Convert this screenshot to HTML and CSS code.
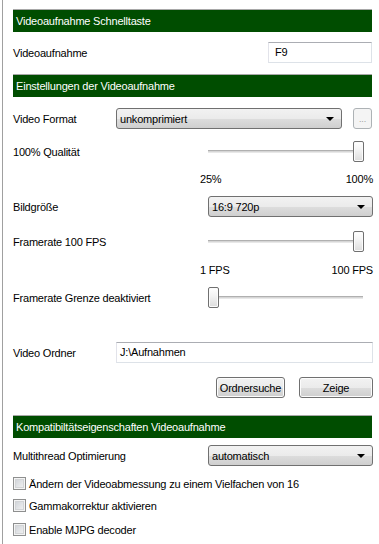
FILE: index.html
```html
<!DOCTYPE html>
<html lang="de">
<head>
<meta charset="utf-8">
<link rel="stylesheet" href="styles.css">
</head>
<body>
<div class="frame">
  <div class="panel">
    <div class="header h1">Videoaufnahme Schnelltaste</div>

    <div class="row r-hotkey">
      <span class="label">Videoaufnahme</span>
      <div class="textbox tb-hotkey">F9</div>
    </div>

    <div class="header h2">Einstellungen der Videoaufnahme</div>

    <div class="row r-format">
      <span class="label">Video Format</span>
      <div class="combo combo-format"><span>unkomprimiert</span><i class="arrow"></i></div>
      <div class="dots">...</div>
    </div>

    <div class="row r-quality">
      <span class="label">100% Qualität</span>
      <div class="slider"><div class="track"></div><div class="thumb thumb-right"></div></div>
    </div>

    <div class="row scale s-quality">
      <span>25%</span><span>100%</span>
    </div>

    <div class="row r-size">
      <span class="label">Bildgröße</span>
      <div class="combo combo-wide"><span>16:9 720p</span><i class="arrow"></i></div>
    </div>

    <div class="row r-fps">
      <span class="label">Framerate 100 FPS</span>
      <div class="slider"><div class="track"></div><div class="thumb thumb-right"></div></div>
    </div>

    <div class="row scale s-fps">
      <span>1 FPS</span><span>100 FPS</span>
    </div>

    <div class="row r-limit">
      <span class="label">Framerate Grenze deaktiviert</span>
      <div class="slider"><div class="track"></div><div class="thumb thumb-left"></div></div>
    </div>

    <div class="row r-folder">
      <span class="label">Video Ordner</span>
      <div class="textbox tb-folder">J:\Aufnahmen</div>
    </div>

    <div class="row r-buttons">
      <div class="btn btn-browse">Ordnersuche</div>
      <div class="btn btn-show">Zeige</div>
    </div>

    <div class="header h3">Kompatibiltätseigenschaften Videoaufnahme</div>

    <div class="row r-thread">
      <span class="label">Multithread Optimierung</span>
      <div class="combo combo-wide"><span>automatisch</span><i class="arrow"></i></div>
    </div>

    <div class="check c1"><span class="box"></span><span>Ändern der Videoabmessung zu einem Vielfachen von 16</span></div>
    <div class="check c2"><span class="box"></span><span>Gammakorrektur aktivieren</span></div>
    <div class="check c3"><span class="box"></span><span>Enable MJPG decoder</span></div>
  </div>
</div>
</body>
</html>
```
FILE: styles.css
```css
html, body {
  margin: 0;
  padding: 0;
  background: #ffffff;
}
body {
  width: 379px;
  height: 544px;
  overflow: hidden;
  font-family: "Liberation Sans", Arial, sans-serif;
  font-size: 11px;
  letter-spacing: -0.2px;
  color: #000;
}
.frame {
  margin-left: 2px;
  border-left: 1px solid #a0a0a0;
  height: 544px;
  padding-left: 10px;
}
.panel {
  width: 360px;
  display: flex;
  flex-direction: column;
}
.header {
  height: 22px;
  border-top: 1px solid #a8a8a8;
  background: #004d00;
  color: #fff;
  display: flex;
  align-items: center;
  padding-left: 3px;
  width: 356px;
}
.h1 { margin-top: 9px; }
.h2 { margin-top: 11px; }
.h3 { margin-top: 17px; }

.row {
  display: flex;
  align-items: center;
  height: 21px;
  position: relative;
}
.label { width: 103px; flex: none; }
.r-hotkey { margin-top: 10px; }
.r-hotkey .label { width: 255px; }
.r-format { margin-top: 11px; }
.r-quality { margin-top: 12px; }
.r-size { margin-top: 11px; }
.r-fps { margin-top: 14px; }
.r-limit { margin-top: 11px; }
.r-folder { margin-top: 34px; }
.r-buttons { margin-top: 14px; justify-content: flex-end; gap: 14px; }
.r-thread { margin-top: 7px; }

.r-quality .label, .r-size .label, .r-fps .label, .r-limit .label, .r-thread .label { width: 195px; }

.scale {
  height: 13px;
  justify-content: space-between;
  padding-left: 187px;
  width: 173px;
}
.s-quality { margin-top: 10px; }
.s-fps { margin-top: 11px; }

.textbox {
  height: 21px;
  box-sizing: border-box;
  border: 1px solid #dde2e8;
  border-top-color: #abadb3;
  border-left-color: #e2e3ea;
  padding: 2px 0 0 6px;
  line-height: 15px;
}
.tb-hotkey { width: 104px; }
.tb-folder { width: 257px; padding-left: 3px; }

.combo {
  height: 21px;
  box-sizing: border-box;
  border: 1px solid #707070;
  border-radius: 3px;
  background: linear-gradient(#f2f2f2 0%, #ebebeb 50%, #dddddd 51%, #cfcfcf 100%);
  display: flex;
  align-items: center;
  justify-content: space-between;
  padding: 0 7px 0 3px;
}
.combo-format { width: 226px; }
.combo-wide { width: 165px; }
.arrow {
  width: 0; height: 0;
  border-left: 4px solid transparent;
  border-right: 4px solid transparent;
  border-top: 4px solid #000;
}
.dots {
  margin-left: 11px;
  width: 19px;
  height: 21px;
  box-sizing: border-box;
  border: 1px solid #adb2b5;
  border-radius: 3px;
  background: #f4f4f4;
  color: #a0a0a0;
  font-size: 9px;
  display: flex;
  align-items: center;
  justify-content: center;
}

.slider {
  position: relative;
  width: 156px;
  height: 21px;
}
.track {
  position: absolute;
  left: 0; right: 1px;
  top: 9px;
  height: 3px;
  box-sizing: border-box;
  border-top: 1px solid #b0b0b0;
  border-bottom: 1px solid #e8e8e8;
  background: #d6d6d6;
}
.thumb {
  position: absolute;
  top: 0;
  width: 11px;
  height: 21px;
  box-sizing: border-box;
  border: 1px solid #707070;
  border-radius: 2px;
  background: linear-gradient(#ffffff 0%, #f2f2f2 45%, #dcdcdc 100%);
  box-shadow: inset 0 0 0 1px #fbfbfb;
}
.thumb-right { right: 0; }
.thumb-left { left: 0; }

.btn {
  height: 21px;
  box-sizing: border-box;
  border: 1px solid #707070;
  border-radius: 3px;
  background: linear-gradient(#f2f2f2 0%, #ebebeb 50%, #dddddd 51%, #cfcfcf 100%);
  box-shadow: inset 0 0 0 1px #fcfcfc;
  display: flex;
  align-items: center;
  justify-content: center;
}
.btn-browse { width: 69px; }
.btn-show { width: 74px; }

.check {
  display: flex;
  align-items: center;
  gap: 3px;
  height: 13px;
}
.c1 { margin-top: 11px; }
.c2 { margin-top: 9px; }
.c3 { margin-top: 11px; }
.box {
  width: 13px;
  height: 13px;
  box-sizing: border-box;
  border: 1px solid #8e8f8f;
  background: linear-gradient(135deg, #cbcfd5 0%, #f6f6f6 100%);
  box-shadow: inset 0 0 0 1px #f4f4f4, inset 0 0 0 2px #d2d4d6;
  flex: none;
}
```
